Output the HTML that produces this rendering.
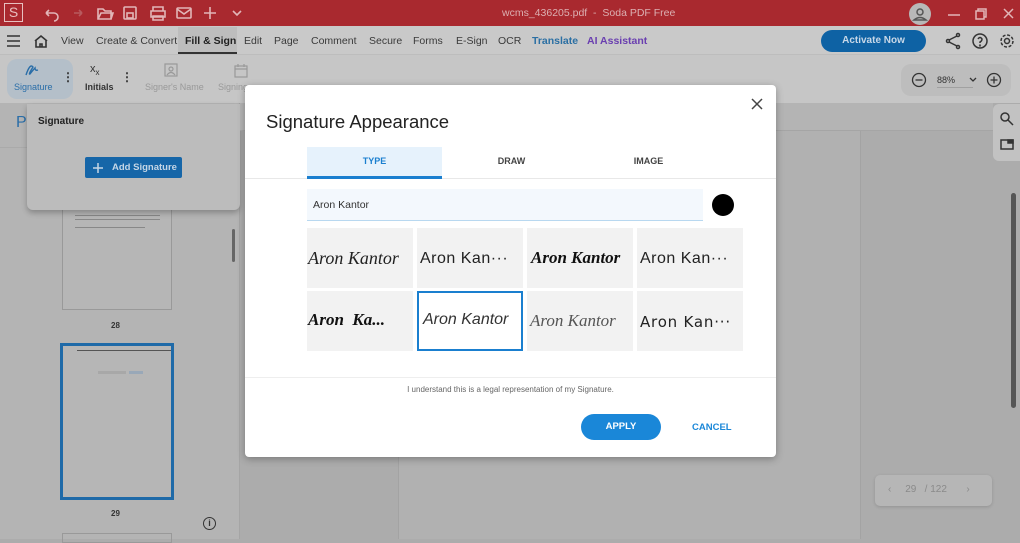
<!DOCTYPE html>
<html><head><meta charset="utf-8"><style>
*{margin:0;padding:0;box-sizing:border-box}
body{width:1020px;height:539px;overflow:hidden;position:relative;font-family:"Liberation Sans",sans-serif;background:#acacac}
.a{position:absolute}
.t{position:absolute;white-space:nowrap}
.m{position:absolute;white-space:nowrap;top:35px;font-size:10.5px;color:#3a3a3a}
</style></head><body>
<!-- title bar -->
<div class="a" style="left:0;top:0;width:1020px;height:26px;background:#a9292f"></div>
<div class="a" style="left:4px;top:3px;width:19px;height:19px;border:1.5px solid #e8c0c0;color:#e8c0c0;font-size:14px;text-align:center;line-height:16px">S</div>
<svg class="a" style="left:40px;top:4px" width="210" height="18" fill="none" stroke="#e2b6b8" stroke-width="1.6">
<path d="M6 9 h8 a4 4 0 0 1 0 8 M6 9 l3 -3 M6 9 l3 3"/>
<path d="M42 9 h-8 M42 9 l-3 -3 M42 9 l-3 3" stroke="#b85a5e"/>
<path d="M58 5 h5 l2 2 h6 v8 h-13z M58 15 l3 -6 h12 l-2 6"/>
<rect x="84" y="3" width="12" height="12" rx="1"/><rect x="87" y="9" width="6" height="5"/>
<path d="M111 7 h14 v6 h-14z M113 7 v-4 h10 v4 M113 12 h10 v4 h-10z"/>
<rect x="137" y="4" width="14" height="10" rx="1"/><path d="M137 5 l7 5 l7 -5"/>
<path d="M170 3 v12 M164 9 h12"/>
<path d="M193 7 l4 4 l4 -4"/>
</svg>
<div class="t" style="left:502px;top:7px;font-size:10.5px;color:#dcb0b2">wcms_436205.pdf &nbsp;- &nbsp;Soda PDF Free</div>
<div class="a" style="left:909px;top:3px;width:22px;height:22px;border-radius:50%;background:#b8b8b8"></div>
<svg class="a" style="left:909px;top:3px" width="110" height="22" fill="none" stroke="#e2b6b8" stroke-width="1.5">
<circle cx="11" cy="9" r="3" stroke="#555"/><path d="M5 17 q6 -5 12 0z" stroke="#555"/>
<path d="M39 12 h12"/><rect x="67" y="8" width="8" height="8"/><path d="M69 8 v-2 h8 v8 h-2"/><path d="M95 6 l9 9 M104 6 l-9 9"/>
</svg>
<!-- menu bar -->
<div class="a" style="left:0;top:26px;width:1020px;height:29px;background:#c9c9c9;border-bottom:1px solid #bdbdbd"></div>
<svg class="a" style="left:6px;top:34px" width="44" height="14" fill="none" stroke="#333" stroke-width="1.6"><path d="M1 2h13M1 7h13M1 12h13"/><path d="M29 7 l6 -5 l6 5 M30 6 v7 h10 v-7 M34 13 v-3 h2 v3"/></svg>
<div class="m" style="left:61px">View</div>
<div class="m" style="left:96px">Create &amp; Convert</div>
<div class="a" style="left:178px;top:27px;width:59px;height:27px;background:#bdbdbd;border-bottom:2px solid #333"></div>
<div class="m" style="left:185px;color:#222;font-weight:bold">Fill &amp; Sign</div>
<div class="m" style="left:244px">Edit</div>
<div class="m" style="left:274px">Page</div>
<div class="m" style="left:311px">Comment</div>
<div class="m" style="left:369px">Secure</div>
<div class="m" style="left:413px">Forms</div>
<div class="m" style="left:456px">E-Sign</div>
<div class="m" style="left:498px">OCR</div>
<div class="m" style="left:532px;color:#2b6fa3;font-weight:bold">Translate</div>
<div class="m" style="left:587px;color:#6a3fb0;font-weight:bold">AI Assistant</div>
<div class="a" style="left:821px;top:30px;width:105px;height:22px;border-radius:11px;background:#0e62a4;color:#c8d8e8;font-size:10px;font-weight:bold;text-align:center;line-height:22px">Activate Now</div>
<svg class="a" style="left:944px;top:32px" width="74" height="18" fill="none" stroke="#333" stroke-width="1.5">
<circle cx="14" cy="3" r="1.5"/><circle cx="4" cy="9" r="1.5"/><circle cx="14" cy="15" r="1.5"/><path d="M5 8l8-4M5 10l8 4"/>
<circle cx="36" cy="9" r="7"/><path d="M34 7 q2 -3 4 0 q0 2 -2 3 v1" /><circle cx="36" cy="13.5" r=".4"/>
<circle cx="63" cy="9" r="2.5"/><circle cx="63" cy="9" r="6" stroke-dasharray="3 1.7"/>
</svg>
<!-- ribbon -->
<div class="a" style="left:0;top:55px;width:1020px;height:48px;background:#c6c6c6"></div>
<div class="a" style="left:7px;top:59px;width:66px;height:40px;border-radius:10px;background:#b4bfc9"></div>
<svg class="a" style="left:24px;top:63px" width="16" height="14" fill="none" stroke="#2a6ea8" stroke-width="1.4"><path d="M2 12 q4-12 7-8 q-5 8 -3 7 q3-4 5-6 q0 3 3 2"/></svg>
<div class="t" style="left:14px;top:82px;font-size:9px;color:#2a6ea8">Signature</div>
<div class="t" style="left:62px;top:70px;font-size:12px;color:#333;font-weight:bold">⋮</div>
<div class="t" style="left:90px;top:63px;font-size:11px;color:#333">x<sub style="font-size:8px">x</sub></div>
<div class="t" style="left:85px;top:82px;font-size:9px;color:#333;font-weight:bold">Initials</div>
<div class="t" style="left:121px;top:70px;font-size:12px;color:#333;font-weight:bold">⋮</div>
<svg class="a" style="left:164px;top:63px" width="90" height="16" fill="none" stroke="#999" stroke-width="1.2"><rect x="1" y="1" width="12" height="12"/><circle cx="7" cy="6" r="2"/><path d="M3 12 q4-5 8 0"/><rect x="71" y="3" width="12" height="11"/><path d="M71 6h12M74 1v3M80 1v3"/></svg>
<div class="t" style="left:145px;top:82px;font-size:9px;color:#999">Signer's Name</div>
<div class="t" style="left:218px;top:82px;font-size:9px;color:#999">Signing</div>
<div class="a" style="left:901px;top:64px;width:110px;height:32px;border-radius:10px;background:#bdbdbd"></div>
<svg class="a" style="left:911px;top:72px" width="95" height="16" fill="none" stroke="#333" stroke-width="1.3"><circle cx="8" cy="8" r="6.5"/><path d="M4.5 8h7"/><circle cx="83" cy="8" r="6.5"/><path d="M79.5 8h7M83 4.5v7"/><path d="M59 6l3 3 3-3"/><path d="M26 15.5h36" stroke="#999" stroke-width=".8"/></svg>
<div class="t" style="left:937px;top:75px;font-size:9px;color:#333">88%</div>
<!-- sidebar -->
<div class="a" style="left:0;top:103px;width:240px;height:436px;background:#b4b4b4;border-right:1px solid #a5a5a5"></div>
<div class="a" style="left:0;top:103px;width:240px;height:45px;border-bottom:1px solid #aaa"></div>
<div class="t" style="left:16px;top:114px;font-size:16px;color:#2a6ea8">P</div>
<div class="a" style="left:232px;top:229px;width:3px;height:33px;background:#666;border-radius:2px"></div>
<div class="a" style="left:62px;top:200px;width:110px;height:110px;border:1px solid #999;background:#b6b6b6"></div>
<div class="a" style="left:75px;top:215px;width:85px;height:1px;background:#888"></div>
<div class="a" style="left:75px;top:219px;width:85px;height:1px;background:#888"></div>
<div class="a" style="left:75px;top:227px;width:70px;height:1px;background:#888"></div>
<div class="t" style="left:111px;top:321px;font-size:8px;font-weight:bold;color:#333">28</div>
<div class="a" style="left:60px;top:343px;width:114px;height:157px;border:3px solid #1f6aa8;background:#b6b6b6"></div>
<div class="a" style="left:77px;top:350px;width:94px;height:1px;background:#555"></div>
<div class="a" style="left:98px;top:371px;width:28px;height:3px;background:#a8a8a8"></div>
<div class="a" style="left:129px;top:371px;width:14px;height:3px;background:#99a8b8"></div>
<div class="t" style="left:111px;top:509px;font-size:8px;font-weight:bold;color:#333">29</div>
<div class="a" style="left:62px;top:533px;width:110px;height:10px;border:1px solid #999"></div>
<div class="a" style="left:203px;top:517px;width:13px;height:13px;border:1.3px solid #333;border-radius:50%;font-size:9px;text-align:center;line-height:11px;color:#333;font-weight:bold">i</div>
<!-- popup -->
<div class="a" style="left:27px;top:104px;width:213px;height:106px;background:#bcbcbc;border-radius:0 0 6px 6px;box-shadow:0 3px 6px rgba(0,0,0,.25)"></div>
<div class="t" style="left:38px;top:116px;font-size:10px;font-weight:bold;color:#222">Signature</div>
<div class="a" style="left:85px;top:157px;width:97px;height:21px;background:#1666a8;border-radius:2px;color:#c5d6e6;font-size:9.5px;font-weight:bold;line-height:21px;padding-left:27px">Add Signature</div>
<svg class="a" style="left:92px;top:162px" width="12" height="12" stroke="#c5d6e6" stroke-width="1.5"><path d="M6 1v10M1 6h10"/></svg>
<!-- doc area -->
<div class="a" style="left:240px;top:103px;width:753px;height:28px;background:#b4b4b4;border-bottom:1px solid #a5a5a5"></div>
<div class="a" style="left:398px;top:131px;width:463px;height:408px;background:#b1b1b1;border-left:1px solid #a3a3a3;border-right:1px solid #a3a3a3"></div>
<div class="a" style="left:993px;top:104px;width:27px;height:57px;background:#c2c2c2;border-radius:6px 0 0 6px"></div>
<svg class="a" style="left:999px;top:111px" width="16" height="44" fill="none" stroke="#333" stroke-width="1.5"><circle cx="6" cy="6" r="4"/><path d="M9 9l5 5"/><rect x="2" y="29" width="12" height="9"/><rect x="9" y="29" width="5" height="3" fill="#333"/></svg>
<div class="a" style="left:1011px;top:193px;width:5px;height:215px;background:#555;border-radius:3px"></div>
<div class="a" style="left:875px;top:475px;width:117px;height:31px;background:#b6b6b6;border-radius:5px;box-shadow:0 1px 3px rgba(0,0,0,.15)"></div>
<div class="t" style="left:888px;top:484px;font-size:10px;color:#8a8a8a">‹ &nbsp;&nbsp;&nbsp;&nbsp;29 &nbsp;&nbsp;/ 122 &nbsp;&nbsp;&nbsp;&nbsp;&nbsp;&nbsp;›</div>
<!-- dialog -->
<div class="a" style="left:245px;top:85px;width:531px;height:372px;background:#fff;border-radius:4px;box-shadow:0 2px 8px rgba(0,0,0,.3)"></div>
<svg class="a" style="left:751px;top:98px" width="12" height="12" stroke="#444" stroke-width="1.5"><path d="M1 1l10 10M11 1l-10 10"/></svg>
<div class="t" style="left:266px;top:111px;font-size:18.5px;color:#222">Signature Appearance</div>
<div class="a" style="left:245px;top:178px;width:531px;height:1px;background:#e8e8e8"></div>
<div class="a" style="left:307px;top:147px;width:135px;height:32px;background:#e6f2fc;border-bottom:3px solid #1a7fcf"></div>
<div class="t" style="left:307px;top:156px;width:135px;text-align:center;font-size:9px;font-weight:bold;color:#1a7fcf">TYPE</div>
<div class="t" style="left:444px;top:156px;width:135px;text-align:center;font-size:9px;font-weight:bold;color:#444">DRAW</div>
<div class="t" style="left:581px;top:156px;width:135px;text-align:center;font-size:9px;font-weight:bold;color:#444">IMAGE</div>
<div class="a" style="left:307px;top:189px;width:396px;height:32px;background:#f3f8fd;border-bottom:1px solid #b8d8f0"></div>
<div class="t" style="left:313px;top:199px;font-size:10.5px;color:#333">Aron Kantor</div>
<div class="a" style="left:712px;top:194px;width:22px;height:22px;border-radius:50%;background:#000"></div>
<div class="a" style="left:307px;top:228px;width:106px;height:60px;background:#f2f2f2"></div>
<div class="a" style="left:417px;top:228px;width:106px;height:60px;background:#f2f2f2"></div>
<div class="a" style="left:527px;top:228px;width:106px;height:60px;background:#f2f2f2"></div>
<div class="a" style="left:637px;top:228px;width:106px;height:60px;background:#f2f2f2"></div>
<div class="a" style="left:307px;top:291px;width:106px;height:60px;background:#f2f2f2"></div>
<div class="a" style="left:417px;top:291px;width:106px;height:60px;background:#fff;border:2px solid #1a7fcf"></div>
<div class="a" style="left:527px;top:291px;width:106px;height:60px;background:#f2f2f2"></div>
<div class="a" style="left:637px;top:291px;width:106px;height:60px;background:#f2f2f2"></div>
<div class="t" style="left:308px;top:248px;font-size:18px;font-style:italic;font-family:'Liberation Serif',serif;color:#222">Aron Kantor</div>
<div class="t" style="left:420px;top:250px;font-size:16px;color:#222;letter-spacing:.5px">Aron Kan···</div>
<div class="t" style="left:531px;top:248px;font-size:17px;font-weight:bold;font-style:italic;font-family:'Liberation Serif',serif;color:#111">Aron Kantor</div>
<div class="t" style="left:640px;top:250px;font-size:16px;color:#222;letter-spacing:.5px">Aron Kan···</div>
<div class="t" style="left:308px;top:310px;font-size:17px;font-weight:bold;font-style:italic;font-family:'Liberation Serif',serif;color:#111">Aron&nbsp; Ka...</div>
<div class="t" style="left:423px;top:311px;font-size:16px;font-style:italic;color:#333">Aron Kantor</div>
<div class="t" style="left:530px;top:311px;font-size:17px;font-style:italic;font-family:'Liberation Serif',serif;color:#555">Aron Kantor</div>
<div class="t" style="left:640px;top:313px;color:#222;letter-spacing:.8px;font-family:'DejaVu Sans',sans-serif;font-size:15px">Aron Kan···</div>
<div class="a" style="left:245px;top:377px;width:531px;height:1px;background:#eee"></div>
<div class="t" style="left:245px;top:385px;width:531px;text-align:center;font-size:8px;color:#666">I understand this is a legal representation of my Signature.</div>
<div class="a" style="left:581px;top:414px;width:80px;height:26px;border-radius:13px;background:#1a87d8;color:#fff;font-size:9.5px;font-weight:bold;text-align:center;line-height:26px">APPLY</div>
<div class="t" style="left:692px;top:422px;font-size:9.5px;font-weight:bold;color:#1a87d8">CANCEL</div>
</body></html>
